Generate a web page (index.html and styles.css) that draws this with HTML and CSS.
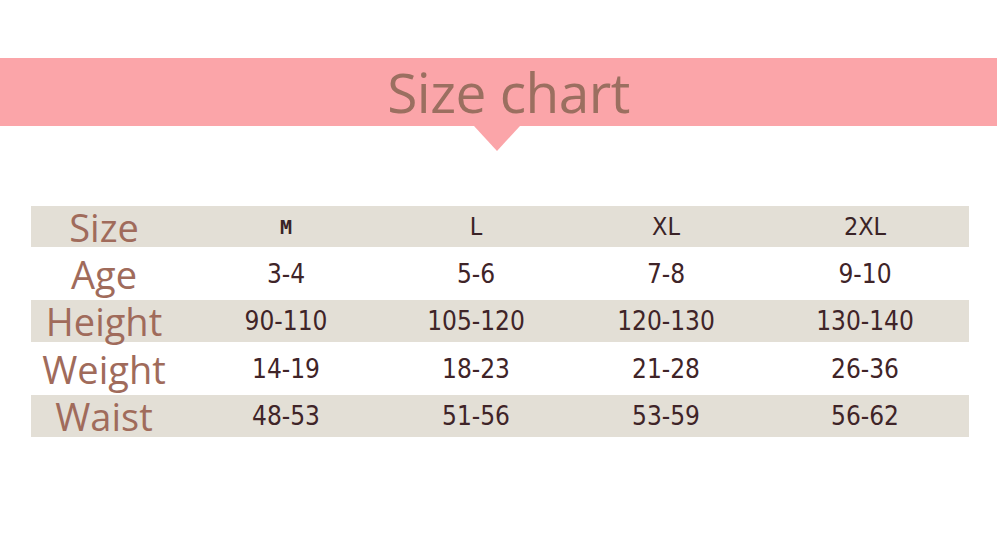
FILE: index.html
```html
<!DOCTYPE html>
<html lang="en">
<head>
<meta charset="utf-8">
<title>Size chart</title>
<link rel="stylesheet" href="styles.css">
</head>
<body>
<header class="banner-wrap">
  <div class="banner"><h1 class="title">Size chart</h1></div>
  <div class="pointer-row"><div class="pointer"></div></div>
</header>
<main class="chart">
  <div class="row band">
    <div class="label">Size</div>
    <div class="cell head head-m">M</div>
    <div class="cell head">L</div>
    <div class="cell head">XL</div>
    <div class="cell head">2XL</div>
  </div>
  <div class="row tall">
    <div class="label">Age</div>
    <div class="cell">3-4</div>
    <div class="cell">5-6</div>
    <div class="cell">7-8</div>
    <div class="cell">9-10</div>
  </div>
  <div class="row band">
    <div class="label">Height</div>
    <div class="cell">90-110</div>
    <div class="cell">105-120</div>
    <div class="cell">120-130</div>
    <div class="cell">130-140</div>
  </div>
  <div class="row tall">
    <div class="label">Weight</div>
    <div class="cell">14-19</div>
    <div class="cell">18-23</div>
    <div class="cell">21-28</div>
    <div class="cell">26-36</div>
  </div>
  <div class="row band">
    <div class="label">Waist</div>
    <div class="cell">48-53</div>
    <div class="cell">51-56</div>
    <div class="cell">53-59</div>
    <div class="cell">56-62</div>
  </div>
</main>
</body>
</html>
```

FILE: styles.css
```css
html, body {
  margin: 0;
  padding: 0;
  background: #ffffff;
}

body {
  width: 1000px;
  height: 540px;
  overflow: hidden;
  font-family: "Open Sans", "Noto Sans", sans-serif;
}

.banner-wrap {
  padding-top: 58px;
  width: 997px;
}

.banner {
  height: 68px;
  background: #fba5a9;
  display: flex;
  align-items: center;
  justify-content: center;
}

.title {
  margin: 0 0 0 20px;
  font-weight: 400;
  font-size: 55px;
  line-height: 68px;
  color: #9b6f60;
  letter-spacing: -0.5px;
}

.pointer-row {
  display: flex;
  justify-content: center;
}

.pointer {
  width: 0;
  height: 0;
  border-left: 23px solid transparent;
  border-right: 23px solid transparent;
  border-top: 25px solid #fba5a9;
  margin-left: -4px;
}

.chart {
  margin: 55px 0 0 31px;
  width: 938px;
}

.row {
  display: grid;
  grid-template-columns: 160px 190px 190px 190px 208px;
  align-items: center;
}

.band {
  background: #e3dfd6;
  height: 42px;
}

.row.band:first-child {
  height: 41px;
}

.tall {
  height: 53px;
}

.label {
  padding-right: 14px;
  text-align: center;
  font-family: "Open Sans", "Noto Sans", sans-serif;
  font-size: 38px;
  line-height: 38px;
  color: #a06b5b;
}

.cell {
  text-align: center;
  font-family: "DejaVu Sans Condensed", "DejaVu Sans", sans-serif;
  font-size: 26px;
  line-height: 30px;
  color: #3f2428;
}

.head {
  font-size: 25px;
  color: #3a2326;
}

.head-m {
  font-family: "DejaVu Sans Mono", monospace;
  font-weight: 700;
  font-size: 20px;
}
```
